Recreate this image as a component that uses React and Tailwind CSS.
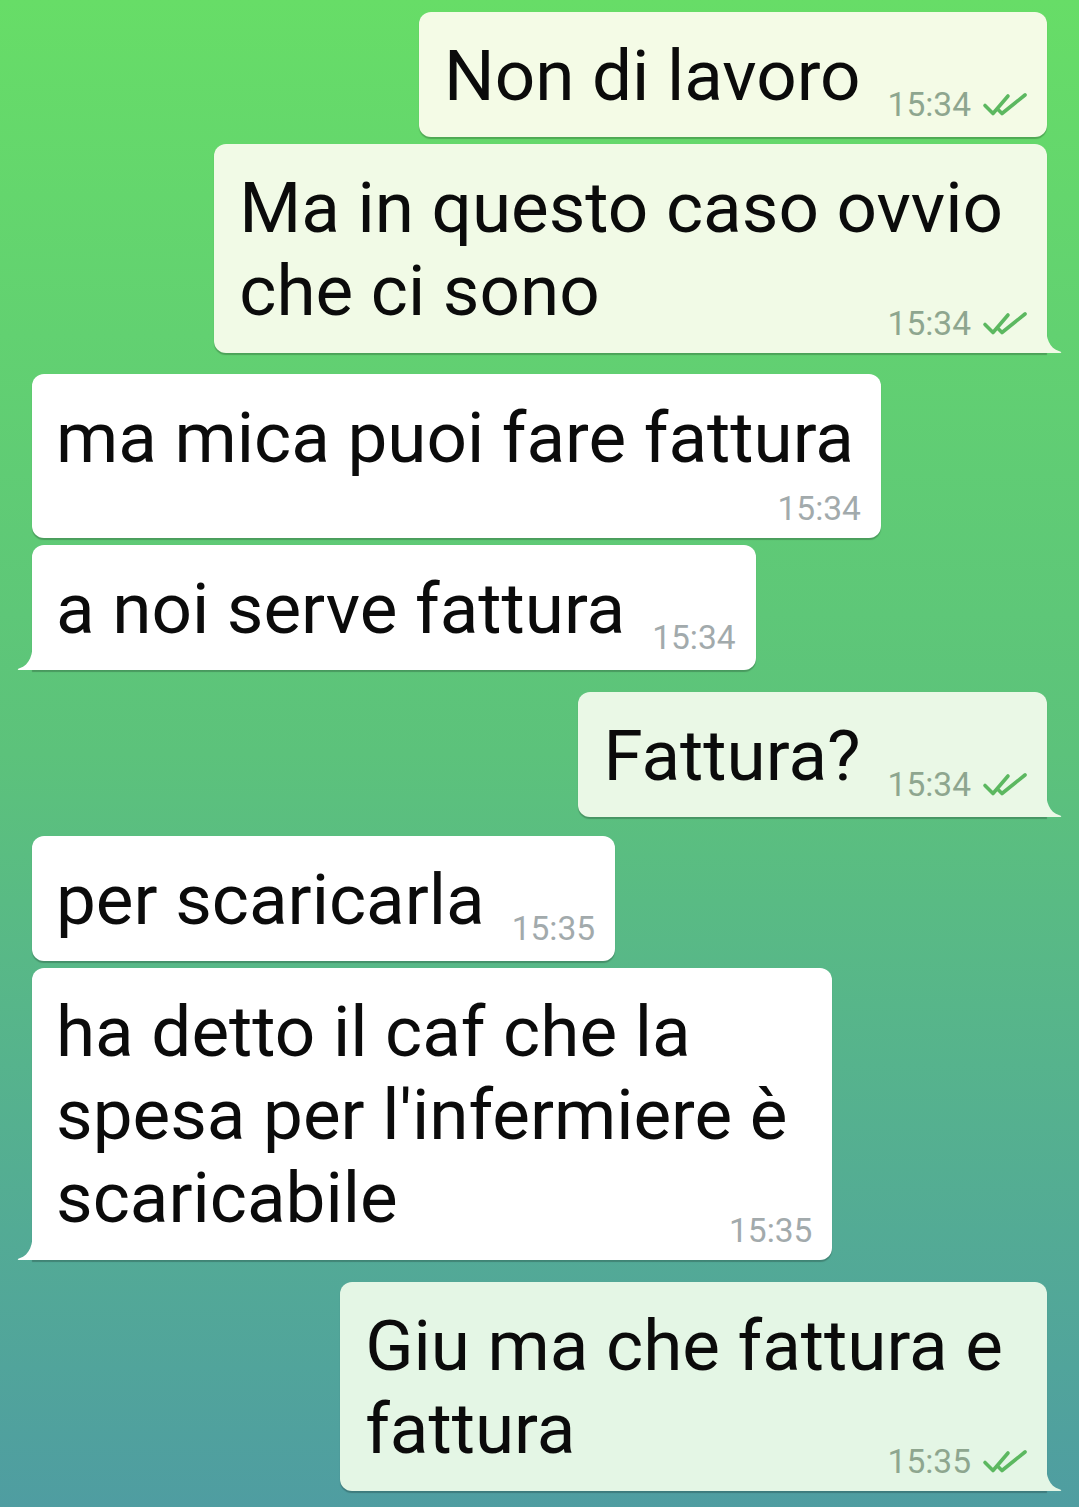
import React from "react";

const messages = [
  { out: true, lines: ["Non di lavoro"], time: "15:34", mode: "inline", bg: "#f4fbe6", tail: false, gap: "mt-0" },
  { out: true, lines: ["Ma in questo caso ovvio", "che ci sono"], time: "15:34", mode: "overlap", bg: "#f1fae6", tail: true, gap: "mt-[7px]" },
  { out: false, lines: ["ma mica puoi fare fattura"], time: "15:34", mode: "below", bg: "#ffffff", tail: false, gap: "mt-[21px]" },
  { out: false, lines: ["a noi serve fattura"], time: "15:34", mode: "inline", bg: "#ffffff", tail: true, gap: "mt-[7px]" },
  { out: true, lines: ["Fattura?"], time: "15:34", mode: "inline", bg: "#eaf8e6", tail: true, gap: "mt-[22px]" },
  { out: false, lines: ["per scaricarla"], time: "15:35", mode: "inline", bg: "#ffffff", tail: false, gap: "mt-[19px]" },
  { out: false, lines: ["ha detto il caf che la", "spesa per l'infermiere è", "scaricabile"], time: "15:35", mode: "overlap", bg: "#ffffff", tail: true, gap: "mt-[7px]" },
  { out: true, lines: ["Giu ma che fattura e", "fattura"], time: "15:35", mode: "overlap", bg: "#e4f6e5", tail: true, gap: "mt-[22px]" },
];

const DoubleCheck = () => (
  <svg width="46" height="26" viewBox="0 0 46 26" fill="none" className="ml-[11px]">
    <path d="M3 13.5 L11 21.5 L26 4" stroke="#5cb860" strokeWidth="3.6" strokeLinecap="round" strokeLinejoin="round" />
    <path d="M16.5 18 L20 21.5 L43 3" stroke="#5cb860" strokeWidth="3.6" strokeLinecap="round" strokeLinejoin="round" />
  </svg>
);

const Time = ({ out, time, className }) => (
  <div className={"flex items-center justify-end shrink-0 " + (className || "")}>
    <span className={"text-[33.5px] leading-[32px] " + (out ? "text-[#8ea68f]" : "text-[#a2aaac]")}>{time}</span>
    {out && <DoubleCheck />}
  </div>
);

const Tail = ({ out, color }) =>
  out ? (
    <svg width="17" height="28" viewBox="0 0 17 28" className="absolute right-[-16px] bottom-0">
      <path d="M0 0 C0 13 3 23 13.5 26.3 Q16.5 27.4 14.5 28 L0 28 Z" fill={color} />
    </svg>
  ) : (
    <svg width="17" height="30" viewBox="0 0 17 30" className="absolute left-[-16px] bottom-0">
      <path d="M17 0 C17 14 14 25 3.5 28.3 Q0.5 29.4 2.5 30 L17 30 Z" fill={color} />
    </svg>
  );

const Bubble = ({ m }) => {
  const text = (
    <div className="flex flex-col">
      {m.lines.map((l) => (
        <div key={l} className="whitespace-nowrap text-[71px] leading-[83px] text-[#0b0b0b]">
          {l}
        </div>
      ))}
    </div>
  );

  return (
    <div className={"flex " + (m.out ? "justify-end pr-[32px] " : "justify-start pl-[32px] ") + m.gap}>
      <div
        className={
          "relative rounded-[12px] shadow-[0_1.5px_1px_rgba(0,0,0,0.22)] pt-[22px] " +
          (m.out ? "pl-[25px] pr-[19px] " : "pl-[24px] pr-[20px] ") +
          (m.tail ? (m.out ? "rounded-br-none " : "rounded-bl-none ") : "") +
          (m.mode === "inline" ? "pb-[20px]" : "pb-[13px]")
        }
        style={{ backgroundColor: m.bg }}
      >
        {m.mode === "inline" && (
          <div className="flex items-end">
            {text}
            <Time out={m.out} time={m.time} className="ml-[27px] mb-[-4px]" />
          </div>
        )}
        {m.mode === "overlap" && (
          <div className="flex flex-col">
            <div className="pr-[25px]">{text}</div>
            <Time out={m.out} time={m.time} className="mt-[-24px]" />
          </div>
        )}
        {m.mode === "below" && (
          <div className="flex flex-col">
            <div className="pr-[7px]">{text}</div>
            <Time out={m.out} time={m.time} className="mt-[14px]" />
          </div>
        )}
        {m.tail && <Tail out={m.out} color={m.bg} />}
      </div>
    </div>
  );
};

export default function App() {
  return (
    <div className="min-h-[1507px] w-[1079px] overflow-hidden bg-gradient-to-b from-[#67dd67] via-[#5cc27b] to-[#4f9da1] pt-[12px] font-['Roboto',sans-serif]">
      {messages.map((m, i) => (
        <Bubble key={i} m={m} />
      ))}
    </div>
  );
}
